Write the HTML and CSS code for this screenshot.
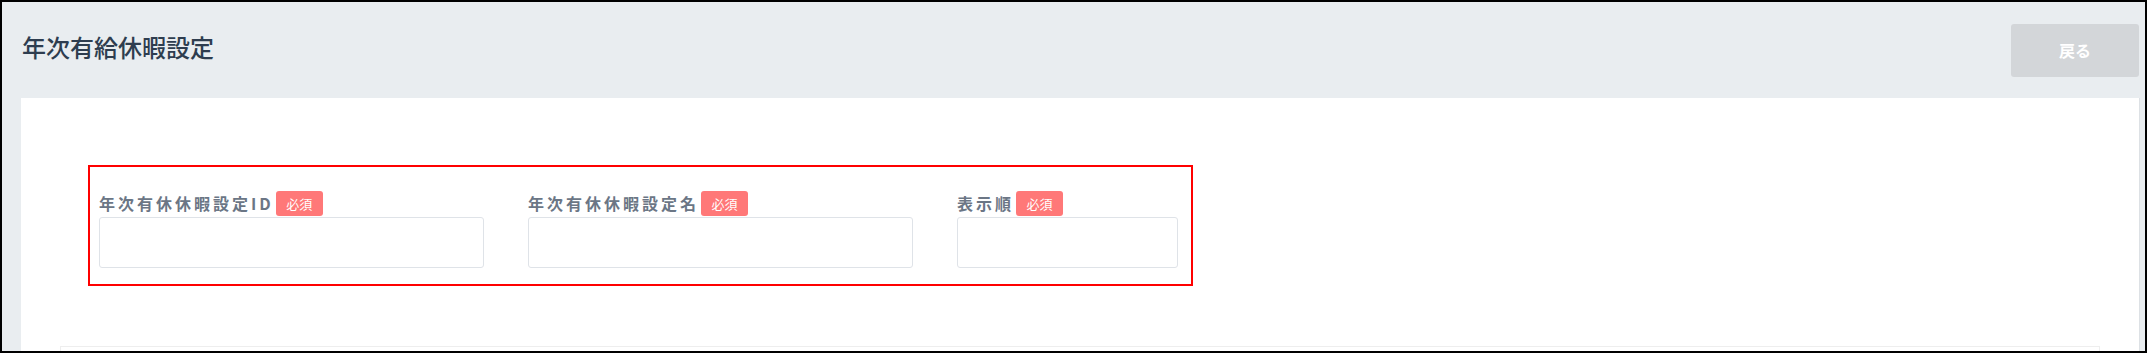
FILE: index.html
```html
<!DOCTYPE html>
<html lang="ja">
<head>
    <meta charset="UTF-8">
    <meta name="viewport" content="width=device-width, initial-scale=1.0">
    <title>年次有給休暇設定</title>
    <link rel="stylesheet" href="styles.css">
</head>
<body>
    <div class="frame">
        <div class="page">
            <div class="page-header">
                <h1 class="page-title">年次有給休暇設定</h1>
                <button class="back-btn">戻る</button>
            </div>

            <div class="panel">
                <!-- 入力項目 -->
                <div class="form-box">
                    <div class="field">
                        <div class="field-label">年次有休休暇設定ID<span class="required">必須</span></div>
                        <input type="text" class="field-input">
                    </div>
                    <div class="field">
                        <div class="field-label">年次有休休暇設定名<span class="required">必須</span></div>
                        <input type="text" class="field-input">
                    </div>
                    <div class="field">
                        <div class="field-label">表示順<span class="required">必須</span></div>
                        <input type="text" class="field-input">
                    </div>
                </div>

                <div class="sub-box"></div>
            </div>
        </div>
    </div>
</body>
</html>
```

FILE: styles.css
```css
html, body {
    margin: 0;
    padding: 0;
    background-color: #fff;
}
body {
    font-family: "Noto Sans CJK JP", "Noto Sans", sans-serif;
}
.frame {
    width: 2147px;
    height: 353px;
    box-sizing: border-box;
    border: 2px solid #000;
    overflow: hidden;
}
.page {
    height: 100%;
    background-color: #e9edf0;
    padding: 0 6px 0 19px;
    box-sizing: border-box;
}
.page-header {
    height: 96px;
    display: flex;
    align-items: center;
    justify-content: space-between;
}
.page-title {
    margin: 0 0 7px 1px;
    font-size: 24px;
    font-weight: 500;
    color: #2e3d4f;
}
.back-btn {
    width: 128px;
    height: 53px;
    border: none;
    border-radius: 3px;
    background-color: #d3d6d9;
    color: #fff;
    font-family: inherit;
    font-size: 16px;
    font-weight: bold;
    cursor: pointer;
}
.panel {
    background-color: #fff;
    height: 300px;
    padding-top: 67px;
    box-shadow: 1px 0 0 #dde1e5;
}
.form-box {
    width: 1105px;
    box-sizing: border-box;
    margin-left: 67px;
    border: 2px solid #ff0000;
    padding: 23px 13px 16px 9px;
    display: grid;
    grid-template-columns: 385px 385px 221px;
    column-gap: 44px;
}
.field-label {
    height: 26px;
    display: flex;
    align-items: center;
    font-size: 16px;
    font-weight: bold;
    letter-spacing: 3px;
    color: #6b7685;
}
.required {
    width: 47px;
    height: 25px;
    margin-left: 2px;
    display: flex;
    align-items: center;
    justify-content: center;
    border-radius: 3px;
    background-color: #ff7878;
    color: #fff;
    font-size: 13px;
    font-weight: normal;
    letter-spacing: 0;
}
.field-input {
    display: block;
    width: 100%;
    height: 51px;
    margin-top: 1px;
    box-sizing: border-box;
    border: 1px solid #dfe3e8;
    border-radius: 3px;
    background: #fff;
}
.sub-box {
    margin: 60px 39px 0 39px;
    height: 40px;
    border: 1px solid #eeeeee;
}
```
